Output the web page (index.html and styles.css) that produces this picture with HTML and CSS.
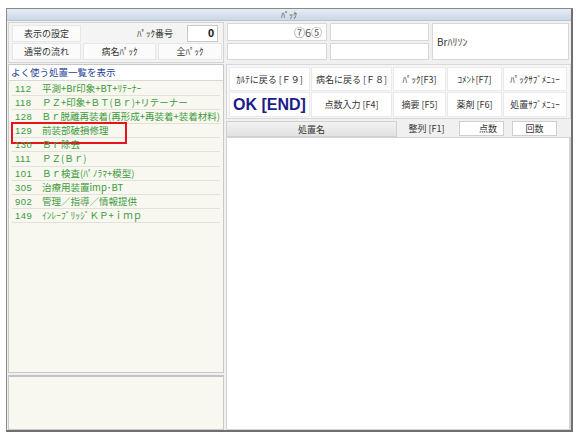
FILE: index.html
```html
<!DOCTYPE html>
<html lang="ja">
<head>
    <meta charset="UTF-8">
    <title>パック</title>
    <link rel="stylesheet" href="styles.css">
</head>
<body>
    <div class="window">
        <div class="titlebar">ﾊﾟｯｸ</div>
        <div class="content">
            <div class="top">
                <div class="top-left">
                    <div class="cell">表示の設定</div>
                    <div class="pack-no">
                        <span class="pack-label">ﾊﾟｯｸ番号</span>
                        <span class="num-box">0</span>
                    </div>
                    <div class="cell">通常の流れ</div>
                    <div class="cell">病名ﾊﾟｯｸ</div>
                    <div class="cell">全ﾊﾟｯｸ</div>
                </div>
                <div class="top-right">
                    <div class="field field-right">⑦6⑤</div>
                    <div class="field"></div>
                    <div class="field field-tall">Brﾊﾘｿﾝ</div>
                    <div class="field"></div>
                    <div class="field"></div>
                </div>
            </div>
            <div class="main">
                <div class="left-col">
                    <div class="list-panel">
                        <div class="list-head">よく使う処置一覧を表示</div>
                        <div class="list">
                            <div class="row"><span class="code">112</span><span>平測+Br印象+BT+ﾘﾃｰﾅｰ</span></div>
                            <div class="row"><span class="code">118</span><span>ＰＺ+印象+ＢＴ(Ｂｒ)+リテーナー</span></div>
                            <div class="row"><span class="code">128</span><span>Ｂｒ脱離再装着(再形成+再装着+装着材料)</span></div>
                            <div class="row marked"><span class="code">129</span><span>前装部破損修理</span></div>
                            <div class="row"><span class="code">130</span><span>Ｂｒ除去</span></div>
                            <div class="row"><span class="code">111</span><span>ＰＺ(Ｂｒ)</span></div>
                            <div class="row"><span class="code">101</span><span>Ｂｒ検査(ﾊﾟﾉﾗﾏ+模型)</span></div>
                            <div class="row"><span class="code">305</span><span>治療用装置imp･BT</span></div>
                            <div class="row"><span class="code">902</span><span>管理／指導／情報提供</span></div>
                            <div class="row"><span class="code">149</span><span>ｲﾝﾚｰﾌﾞﾘｯｼﾞＫＰ+ｉｍｐ</span></div>
                        </div>
                    </div>
                    <div class="memo-panel"></div>
                </div>
                <div class="right-col">
                    <div class="buttons">
                        <div class="btn">ｶﾙﾃに戻る [Ｆ９]</div>
                        <div class="btn">病名に戻る [Ｆ８]</div>
                        <div class="btn">ﾊﾟｯｸ[F3]</div>
                        <div class="btn">ｺﾒﾝﾄ[F7]</div>
                        <div class="btn">ﾊﾟｯｸｻﾌﾞﾒﾆｭｰ</div>
                        <div class="btn btn-ok">OK [END]</div>
                        <div class="btn">点数入力 [F4]</div>
                        <div class="btn">摘要 [F5]</div>
                        <div class="btn">薬剤 [F6]</div>
                        <div class="btn">処置ｻﾌﾞﾒﾆｭｰ</div>
                    </div>
                    <div class="table-head">
                        <div class="th-name">処置名</div>
                        <div class="th-sort">整列 [F1]</div>
                        <div class="th-box th-points">点数</div>
                        <div class="th-box th-count">回数</div>
                    </div>
                    <div class="table-body"></div>
                </div>
            </div>
        </div>
    </div>
</body>
</html>
```

FILE: styles.css
```css
* {
    margin: 0;
    padding: 0;
    box-sizing: border-box;
}

body {
    background: white;
    font-family: "Noto Sans CJK JP", "Noto Sans", sans-serif;
    font-size: 9px;
    color: #333;
}

.window {
    margin: 8px 0 0 6px;
    width: 567px;
    height: 424px;
    border: 1px solid #8a8a8a;
    border-right: 2px solid #707070;
    border-bottom: 2px solid #707070;
    background: #f0f0f0;
    display: flex;
    flex-direction: column;
}

.titlebar {
    height: 12px;
    line-height: 12px;
    text-align: center;
    font-size: 8px;
    color: #444;
    background: linear-gradient(#e6edf5, #c9d7e6);
    border-bottom: 1px solid #b8c4d0;
}

.content {
    flex: 1;
    display: flex;
    flex-direction: column;
    padding: 1px 1px 0 1px;
    gap: 1px;
}

/* top section */
.top {
    display: flex;
    gap: 2px;
    height: 41px;
}

.top-left {
    width: 216px;
    border: 1px solid #d4d4d4;
    background: #f4f4f4;
    padding: 2px 3px 1px 3px;
    display: grid;
    grid-template-columns: 69px 73px 64px;
    grid-template-rows: 17px 17px;
    gap: 1px 2px;
}

.cell {
    background: #fbfbfb;
    border: 1px solid #e6e6e6;
    display: flex;
    align-items: center;
    justify-content: center;
    font-size: 9px;
}

.pack-no {
    grid-column: 2 / 4;
    display: flex;
    align-items: center;
    justify-content: flex-end;
    gap: 14px;
    padding-right: 4px;
}

.pack-label {
    font-size: 9px;
}

.num-box {
    width: 31px;
    height: 17px;
    background: white;
    border: 1px solid #c8c8c8;
    text-align: right;
    padding-right: 3px;
    font-family: "Liberation Sans", sans-serif;
    font-weight: bold;
    font-size: 11px;
    line-height: 15px;
    color: #111;
}

.top-right {
    flex: 1;
    display: grid;
    grid-template-columns: 100px 99px 137px;
    grid-template-rows: 18px 17px;
    gap: 2px 3px;
    padding: 1px 0 0 1px;
}

.field {
    background: white;
    border: 1px solid #d8d8d8;
    font-size: 10px;
    padding: 0 4px;
    display: flex;
    align-items: center;
}

.field-right {
    justify-content: flex-end;
    padding-right: 4px;
    font-size: 11px;
    color: #555;
}

.field-tall {
    grid-row: 1 / 3;
    grid-column: 3;
    font-size: 10px;
    color: #333;
}

/* main section */
.main {
    flex: 1;
    display: flex;
    gap: 2px;
}

.left-col {
    width: 216px;
    display: flex;
    flex-direction: column;
    gap: 2px;
}

.list-panel {
    height: 309px;
    border: 1px solid #c8c8c8;
    background: #f8f8f0;
    display: flex;
    flex-direction: column;
}

.list-head {
    height: 16px;
    line-height: 15px;
    background: white;
    border-bottom: 1px solid #d8d8d8;
    color: #2a3f9a;
    font-size: 9.5px;
    padding-left: 2px;
}

.list {
    padding: 1px 3px 0 3px;
}

.row {
    position: relative;
    height: 14.1px;
    line-height: 13px;
    border-bottom: 1px solid #e2e2d8;
    color: #3d9a3d;
    font-size: 9.5px;
    display: flex;
    white-space: nowrap;
}

.code {
    width: 30px;
    padding-left: 3px;
    font-family: "Liberation Sans", sans-serif;
    letter-spacing: 0.5px;
}

.row.marked::after {
    content: "";
    position: absolute;
    left: -1px;
    top: -2px;
    width: 112px;
    height: 18px;
    border: 2px solid #e8141a;
}

.memo-panel {
    flex: 1;
    border: 1px solid #c8c8c8;
    border-top: 2px solid #c4c4c4;
    background: #f8f8f0;
}

.right-col {
    flex: 1;
    display: flex;
    flex-direction: column;
}

.buttons {
    height: 55px;
    border: 1px solid #d8d8d8;
    background: #f6f6f6;
    padding: 2px 2px 1px 2px;
    display: grid;
    grid-template-columns: 81px 81px 53px 55px 64px;
    grid-template-rows: 24px 25px;
    gap: 1px;
}

.btn {
    background: white;
    border: 1px solid #eaeaea;
    display: flex;
    align-items: center;
    justify-content: center;
    font-size: 9px;
    color: #333;
    white-space: nowrap;
}

.btn-ok {
    font-family: "Liberation Sans", sans-serif;
    font-weight: bold;
    font-size: 16px;
    color: #1c1c8a;
}

.table-head {
    height: 17px;
    margin-top: 1px;
    display: flex;
    align-items: center;
    font-size: 9px;
    padding-right: 14px;
}

.th-name {
    width: 171px;
    height: 16px;
    line-height: 15px;
    text-align: center;
    background: linear-gradient(#f2f2f2, #e2e2e2);
    border: 1px solid #d0d0d0;
}

.th-sort {
    width: 59px;
    text-align: center;
}

.th-box {
    height: 15px;
    line-height: 13px;
    background: white;
    border: 1px solid #cfcfcf;
}

.th-points {
    width: 45px;
    text-align: right;
    padding-right: 6px;
    margin-left: 3px;
}

.th-count {
    width: 45px;
    text-align: center;
    margin-left: 8px;
}

.table-body {
    flex: 1;
    background: white;
    border: 1px solid #d4d4d4;
    border-right: 2px solid #d4d4d4;
}
```
